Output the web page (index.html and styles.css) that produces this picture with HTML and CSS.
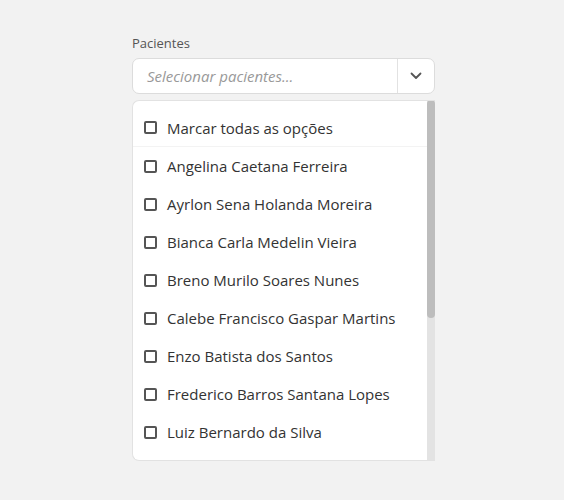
FILE: index.html
```html
<!DOCTYPE html>
<html lang="pt-BR">
<head>
<meta charset="utf-8">
<link rel="stylesheet" href="styles.css">
</head>
<body>
<div class="field">
  <label class="label">Pacientes</label>
  <div class="select">
    <div class="placeholder">Selecionar pacientes...</div>
    <div class="toggle">
      <svg width="12" height="8" viewBox="0 0 12 8"><path d="M1.5 1.5 L6 6 L10.5 1.5" fill="none" stroke="#555" stroke-width="1.8" stroke-linecap="round" stroke-linejoin="round"/></svg>
    </div>
  </div>
  <div class="menu">
    <div class="list">
      <div class="option all"><span class="box"></span>Marcar todas as opções</div>
      <div class="option"><span class="box"></span>Angelina Caetana Ferreira</div>
      <div class="option"><span class="box"></span>Ayrlon Sena Holanda Moreira</div>
      <div class="option"><span class="box"></span>Bianca Carla Medelin Vieira</div>
      <div class="option"><span class="box"></span>Breno Murilo Soares Nunes</div>
      <div class="option"><span class="box"></span>Calebe Francisco Gaspar Martins</div>
      <div class="option"><span class="box"></span>Enzo Batista dos Santos</div>
      <div class="option"><span class="box"></span>Frederico Barros Santana Lopes</div>
      <div class="option"><span class="box"></span>Luiz Bernardo da Silva</div>
    </div>
    <div class="track"><div class="thumb"></div></div>
  </div>
</div>
</body>
</html>
```
FILE: styles.css
```css
html, body {
  margin: 0;
  padding: 0;
  background: #f2f2f2;
}
body {
  font-family: "Open Sans", "Liberation Sans", sans-serif;
  color: #333;
  padding-top: 34px;
}
.field {
  width: 303px;
  margin-left: 132px;
}
.label {
  display: block;
  font-size: 13px;
  color: #555;
  line-height: 18px;
  margin-bottom: 6px;
}
.select {
  display: flex;
  box-sizing: border-box;
  height: 36px;
  width: 303px;
  background: #fff;
  border: 1px solid #dcdcdc;
  border-radius: 7px;
}
.placeholder {
  flex: 1;
  padding-left: 14px;
  font-size: 15px;
  font-style: italic;
  color: #999;
  line-height: 34px;
}
.toggle {
  width: 36px;
  border-left: 1px solid #e2e2e2;
  display: flex;
  align-items: center;
  justify-content: center;
}
.menu {
  margin-top: 6px;
  height: 361px;
  box-sizing: border-box;
  display: flex;
  background: #fff;
  border: 1px solid #e2e2e2;
  border-right: none;
  border-radius: 7px 0 0 7px;
  overflow: hidden;
}
.list {
  flex: 1;
  overflow: hidden;
}
.track {
  width: 8px;
  flex: none;
  background: #e3e3e3;
  margin-top: -1px;
  margin-bottom: -1px;
}
.thumb {
  height: 218px;
  background: #bdbdbd;
  border-radius: 4px;
}
.option {
  display: flex;
  align-items: center;
  height: 38px;
  padding-left: 11px;
  font-size: 15px;
}
.option.all {
  margin-top: 8px;
  border-bottom: 1px solid #f3f3f3;
  height: 37px;
}
.box {
  box-sizing: border-box;
  width: 13px;
  height: 13px;
  border: 2px solid #555;
  border-radius: 2px;
  margin-right: 10px;
  flex: none;
}
```
